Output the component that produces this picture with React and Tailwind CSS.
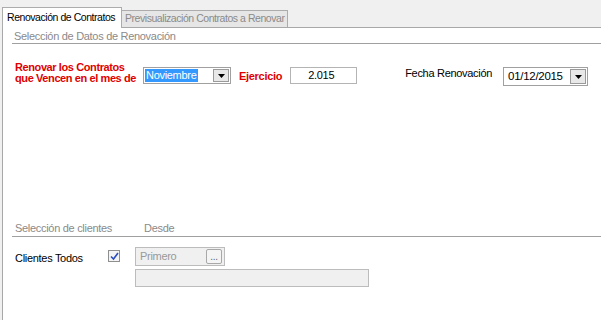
export default function App() {
  const font = { fontFamily: '"Liberation Sans", Arial, sans-serif' };

  return (
    <div className="w-[601px] h-[320px] bg-[#f0f0f0] flex flex-col text-[11px] tracking-[-0.3px] whitespace-nowrap text-black overflow-hidden" style={font}>
      {/* tabs */}
      <div className="h-[27px] flex items-end pl-[2px] shrink-0">
        <div className="h-[21px] w-[120px] bg-white border border-b-0 border-[#acacac] flex items-center pl-[4px] relative z-10 -mb-px text-[10.5px] tracking-[-0.45px]">
          Renovación de Contratos
        </div>
        <div className="h-[17px] w-[166px] bg-[#e6e6e6] border border-l-0 border-b-0 border-[#acacac] flex items-center pl-[3px] text-[#8a8a8a] text-[10.5px] tracking-[-0.45px]">
          Previsualización Contratos a Renovar
        </div>
      </div>

      {/* panel */}
      <div className="flex-1 ml-[2px] bg-white border-l border-t border-[#a8a8a8] flex flex-col">
        <div className="ml-[9px] mt-[2px] h-[14px] border-b border-[#a0a0a0] pl-[2px] text-[#8a8a8a] leading-[12px]">
          Selección de Datos de Renovación
        </div>

        <div className="flex items-start mt-[18px] pl-[12px] h-[26px]">
          <div className="w-[128px] font-bold text-[#e00000] leading-[11px] tracking-[-0.4px]">
            <div>Renovar los Contratos</div>
            <div>que Vencen en el mes de</div>
          </div>
          <div className="mt-[5px] w-[88px] h-[17px] border border-[#a0a0a0] flex items-stretch">
            <div className="flex-1 flex items-center pl-[1px]">
              <span className="bg-[#3399ff] text-white px-[1px] leading-[13px]">Noviembre</span>
            </div>
            <DropBtn />
          </div>
          <div className="ml-[8px] mt-[6px] font-bold text-[#e00000]">Ejercicio</div>
          <div className="ml-[8px] mt-[5px] w-[67px] h-[17px] border border-[#b4b4b4] flex items-center pl-[17px]">
            2.015
          </div>
          <div className="ml-[48px] mt-[3px]">Fecha Renovación</div>
          <div className="ml-[11px] mt-[5px] w-[85px] h-[19px] border border-[#a0a0a0] flex items-stretch">
            <div className="flex-1 flex items-center pl-[4px] text-[11.5px]">01/12/2015</div>
            <DropBtn />
          </div>
        </div>

        <div className="mt-[134px] ml-[9px] h-[15px] border-b border-[#a0a0a0] flex items-start text-[#8a8a8a] leading-[12px]">
          <div className="w-[132px] pl-[3px]">Selección de clientes</div>
          <div>Desde</div>
        </div>

        <div className="flex items-start mt-[10px] pl-[12px]">
          <div className="w-[93px] mt-[3px]">Clientes Todos</div>
          <div className="mt-[3px] w-[12px] h-[12px] border border-[#8e8f8f] bg-[#f4f4f4] flex items-center justify-center">
            <svg width="9" height="9" viewBox="0 0 9 9">
              <path d="M1 4.5 L3.5 7 L8 1" fill="none" stroke="#2a4dbf" strokeWidth="1.6" />
            </svg>
          </div>
          <div className="ml-[15px] flex flex-col gap-[3px]">
            <div className="w-[90px] h-[19px] border border-[#bcbcbc] bg-[#f0f0f0] flex items-center justify-between pl-[4px] pr-[2px] text-[#999999]">
              <span>Primero</span>
              <span className="w-[16px] h-[15px] border border-[#a8a8a8] rounded-[2px] bg-[#f4f4f4] flex items-end justify-center text-[#666] leading-[12px] text-[10px]">
                ...
              </span>
            </div>
            <div className="w-[234px] h-[18px] border border-[#bcbcbc] bg-[#f0f0f0]" />
          </div>
        </div>
      </div>
    </div>
  );
}

function DropBtn() {
  return (
    <div className="w-[16px] bg-[#e8e8e8] border border-[#9a9a9a] m-px flex items-center justify-center">
      <svg width="7" height="4" viewBox="0 0 7 4">
        <path d="M0 0 H7 L3.5 4 Z" fill="#000" />
      </svg>
    </div>
  );
}
